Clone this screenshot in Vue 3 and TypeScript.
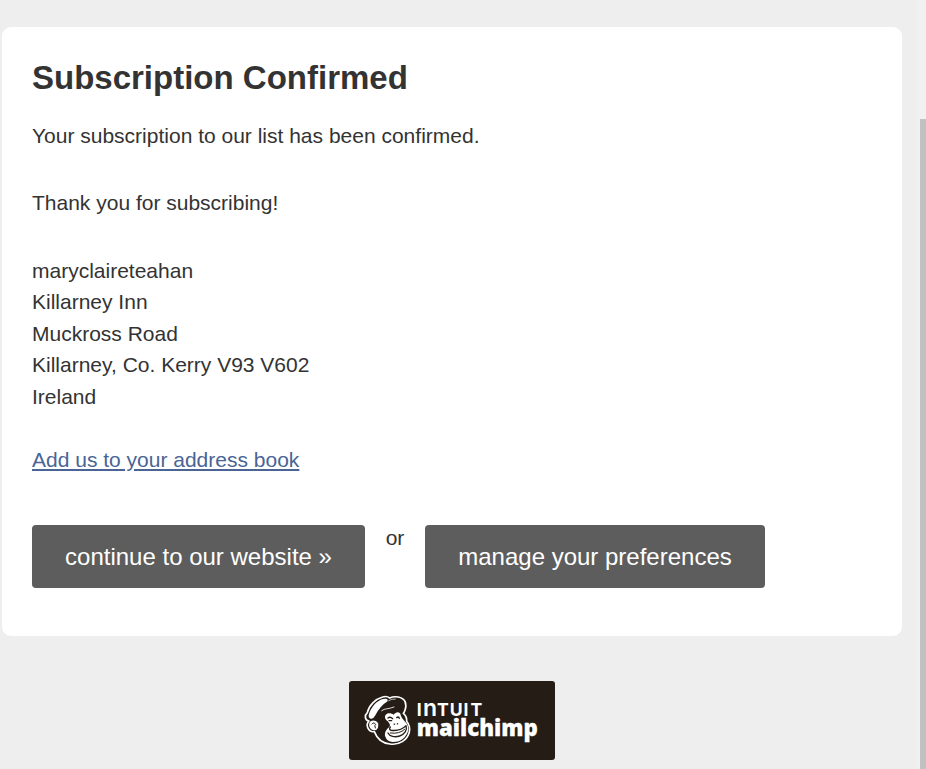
<script setup lang="ts">
const address: string[] = [
  'maryclaireteahan',
  'Killarney Inn',
  'Muckross Road',
  'Killarney, Co. Kerry V93 V602',
  'Ireland',
]
</script>

<template>
  <div class="page">
    <div class="content">
      <main class="card">
        <h1>Subscription Confirmed</h1>
        <p class="confirmed">Your subscription to our list has been confirmed.</p>
        <p class="thanks">Thank you for subscribing!</p>
        <address>
          <div v-for="line in address" :key="line">{{ line }}</div>
        </address>
        <a class="book" href="#">Add us to your address book</a>
        <div class="actions">
          <a class="button first" href="#">continue to our website »</a>
          <span class="or">or</span>
          <a class="button second" href="#">manage your preferences</a>
        </div>
      </main>
      <a class="badge" href="#" aria-label="Intuit Mailchimp">
        <svg width="206" height="79" viewBox="0 0 206 79">
          <g transform="translate(6 4) scale(0.33333)" stroke-linecap="round" stroke-linejoin="round">
            <path
              d="M42 108C29 106 28 91 37 83C42 61 61 42 83 36Q95 32 104 39C119 32 142 35 150 49Q155 61 150 76Q148 82 145 85Q156 94 155 109Q167 124 163 141C157 166 132 181 105 177C83 175 66 161 58 140C40 143 30 120 42 108Z"
              fill="#241c15" stroke="#fff" stroke-width="5"
            />
            <path d="M47 101C34 98 45 77 54 64C65 49 83 38 95 42Q101 45 96 50C83 58 70 72 61 91Q55 103 47 101Z" fill="#fff" />
            <path d="M101 47Q110 41 121 42" fill="none" stroke="#fff" stroke-width="2" />
            <path d="M80 77C90 69 101 73 117 66" fill="none" stroke="#fff" stroke-width="2.5" />
            <path d="M47 109C38 116 43 135 56 136Q65 137 69 128L70 116C65 106 54 104 47 109Z" fill="#fff" />
            <path d="M51 117Q57 109 62 119Q57 119 61 129" fill="none" stroke="#241c15" stroke-width="3" />
            <path
              d="M91 91C96 82 109 84 116 89C121 80 136 78 137 90Q140 101 149 109Q160 119 160 134C155 157 136 172 113 171Q96 170 91 155C87 144 93 134 103 126C108 121 102 114 98 109Q87 102 91 91Z"
              fill="#fff"
            />
            <path d="M99 99Q106 94 113 101M125 98Q130 93 133 100" fill="none" stroke="#241c15" stroke-width="4" />
            <path d="M102 107L110 107M117 117L119 118M127 116L128 117" fill="none" stroke="#241c15" stroke-width="3.5" />
            <path d="M106 126Q101 133 108 136C126 138 142 134 153 122C158 135 148 148 134 153C119 158 104 154 99 144" fill="none" stroke="#241c15" stroke-width="4" />
            <path d="M106 144Q133 148 149 133" fill="none" stroke="#241c15" stroke-width="3" />
          </g>
          <text class="intuit" y="35">
            <tspan x="67.8">I</tspan><tspan x="74" class="arch">n</tspan><tspan x="88.1">T</tspan><tspan x="100.7">U</tspan><tspan x="114.6">I</tspan><tspan x="121.5">T</tspan>
          </text>
          <text class="mailchimp" x="67.8" y="55.4" textLength="121" lengthAdjust="spacingAndGlyphs">mailchimp</text>
        </svg>
      </a>
    </div>
    <div class="scrollbar"><div class="thumb"></div></div>
  </div>
</template>

<style>
body {
  margin: 0;
  background: #eee;
}
</style>

<style scoped>
.page {
  display: flex;
  justify-content: space-between;
  height: 769px;
  overflow: hidden;
  background: #eee;
  color: #333;
  font: 21px/31.5px 'Liberation Sans', Arial, sans-serif;
}
.content {
  display: flex;
  flex-direction: column;
  align-items: center;
  width: 900px;
  padding: 27px 0 0 2px;
}
.card {
  box-sizing: border-box;
  width: 900px;
  height: 609px;
  padding: 30px;
  border-radius: 9px;
  background: #fff;
}
h1 {
  margin: 0;
  font-size: 33px;
  line-height: 41px;
}
p {
  margin: 0;
}
.confirmed {
  margin-top: 22px;
}
.thanks {
  margin-top: 35.8px;
}
address {
  margin-top: 36px;
  font-style: normal;
}
.book {
  display: block;
  width: max-content;
  margin-top: 31.7px;
  color: #4a6496;
  text-underline-offset: 2px;
  text-decoration-thickness: 2px;
}
.actions {
  display: flex;
  margin-top: 49.5px;
}
.button {
  box-sizing: border-box;
  height: 63px;
  border-radius: 4px;
  background: #5d5d5d;
  color: #fff;
  font-size: 24px;
  line-height: 63px;
  text-align: center;
  text-decoration: none;
  white-space: nowrap;
}
.first {
  width: 333px;
}
.second {
  width: 340px;
}
.or {
  width: 60px;
  line-height: 26px;
  text-align: center;
}
.badge {
  flex: none;
  width: 206px;
  height: 79px;
  margin-top: 45px;
  border-radius: 3px;
  background: #241c15;
}
.badge svg {
  display: block;
}
.intuit {
  fill: #fff;
  font: 700 17.6px Inter, sans-serif;
}
.arch {
  font-size: 23px;
  font-weight: 600;
}
.mailchimp {
  fill: #fff;
  stroke: #fff;
  stroke-width: 0.3px;
  font: 800 23px 'Open Sans', sans-serif;
}
.scrollbar {
  width: 6px;
  padding-left: 2px;
  background: #f1f1f1;
}
.thumb {
  height: 650px;
  margin-top: 119px;
  background: #c1c1c1;
}
</style>
